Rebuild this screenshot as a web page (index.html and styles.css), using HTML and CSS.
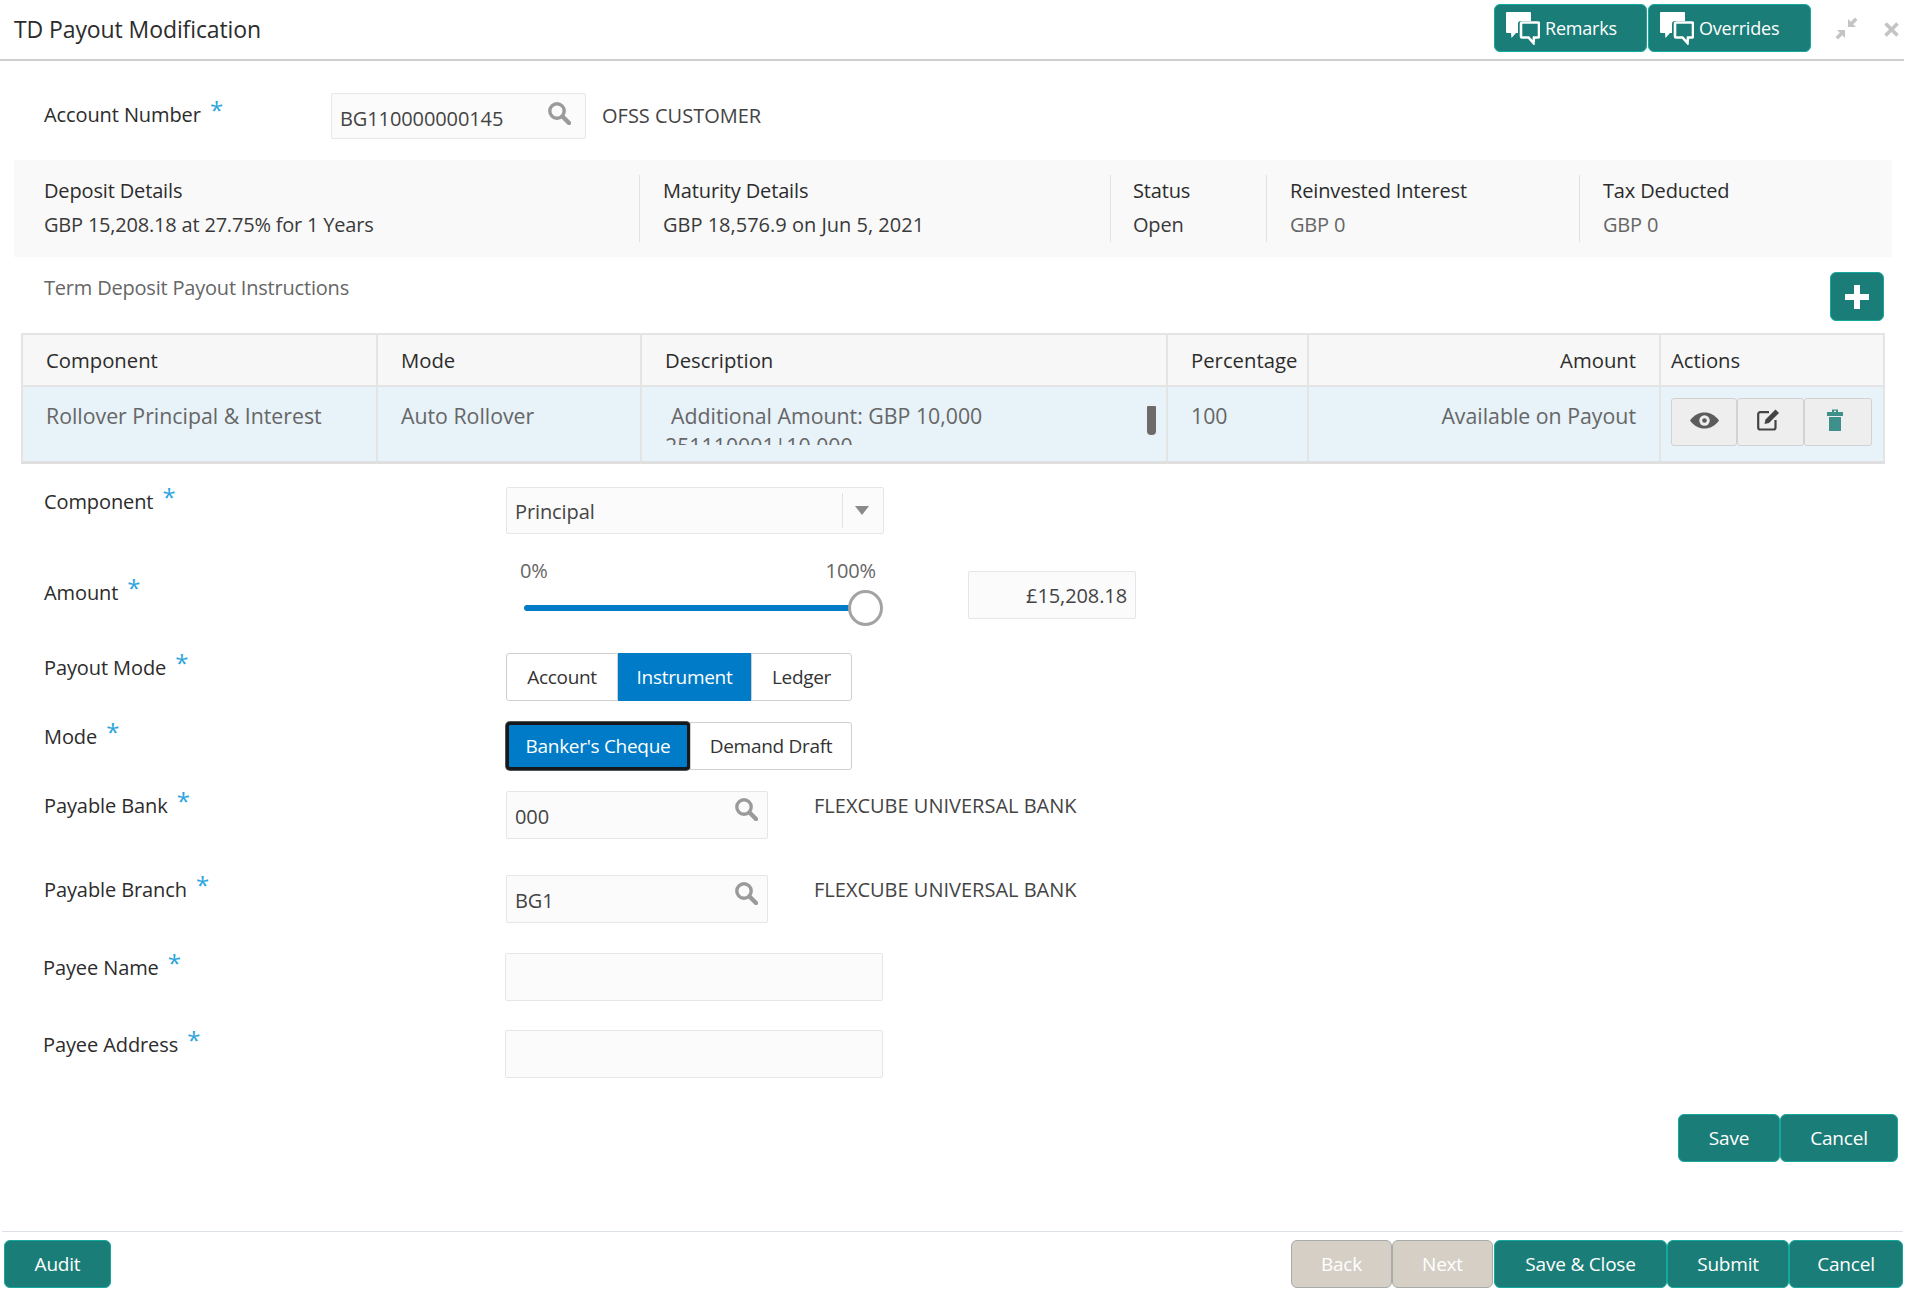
FILE: index.html
```html
<!DOCTYPE html>
<html lang="en">
<head>
<meta charset="utf-8">
<title>TD Payout Modification</title>
<link rel="stylesheet" href="styles.css">
</head>
<body>
<svg class="defs" width="0" height="0" aria-hidden="true">
  <symbol id="i-search" viewBox="0 0 24 24"><circle cx="10" cy="10" r="7.2" fill="none" stroke="currentColor" stroke-width="3.4"/><path d="M15.5 15.5 22 22" stroke="currentColor" stroke-width="4.4" stroke-linecap="round"/></symbol>
  <symbol id="i-chat" viewBox="0 0 34 33"><path d="M1 0h23a1 1 0 0 1 1 1v8H15a3 3 0 0 0-3 3v9H10l-4.500 5-.5-5H1a1 1 0 0 1-1-1V1a1 1 0 0 1 1-1z" fill="#fff"/><path d="M16 10.500h16a1 1 0 0 1 1 1v13a1 1 0 0 1-1 1h-4l-.5 5.500-5-5.500H16a1 1 0 0 1-1-1v-13a1 1 0 0 1 1-1z" fill="#1b7d78" stroke="#fff" stroke-width="2.600"/></symbol>
</svg>
<header class="header">
  <h1 class="title">TD Payout Modification</h1>
  <div class="header-actions">
    <div class="btn-group">
      <button class="btn btn-remark"><svg class="chat"><use href="#i-chat"/></svg>Remarks</button>
      <button class="btn btn-override"><svg class="chat"><use href="#i-chat"/></svg>Overrides</button>
    </div>
    <svg class="win-min" viewBox="0 0 25 25"><path d="M14 11V3l2.800 2.800L21 1.500 23.500 4l-4.300 4.200L22 11zM11 14v8l-2.800-2.800L4 23.500 1.500 21l4.300-4.200L3 14z" fill="#c4c4c4"/></svg>
    <svg class="win-close" viewBox="0 0 15 15"><path d="M1.500 1.500l12 12M13.500 1.500l-12 12" stroke="#c4c4c4" stroke-width="3.600"/></svg>
  </div>
</header>

<section class="account-row">
  <label class="label account-label">Account Number <span class="req">*</span></label>
  <div class="input account-input"><span class="val">BG110000000145</span><svg class="search"><use href="#i-search"/></svg></div>
  <span class="account-name">OFSS CUSTOMER</span>
</section>

<section class="summary">
  <div class="cell c1"><div class="k">Deposit Details</div><div class="v">GBP 15,208.18 at 27.75% for 1 Years</div></div>
  <div class="cell c2"><div class="k">Maturity Details</div><div class="v">GBP 18,576.9 on Jun 5, 2021</div></div>
  <div class="cell c3"><div class="k">Status</div><div class="v">Open</div></div>
  <div class="cell c4"><div class="k">Reinvested Interest</div><div class="v muted">GBP 0</div></div>
  <div class="cell c5"><div class="k">Tax Deducted</div><div class="v muted">GBP 0</div></div>
</section>

<section class="section-head">
  <div class="section-title">Term Deposit Payout Instructions</div>
  <button class="btn add-btn" aria-label="Add"><svg viewBox="0 0 28 28" width="28" height="28"><path d="M11 2h6v9h9v6h-9v9h-6v-9H2v-6h9z" fill="#fff"/></svg></button>
</section>

<table class="grid">
  <thead>
    <tr>
      <th class="w1">Component</th><th class="w2">Mode</th><th class="w3">Description</th><th class="w4">Percentage</th><th class="w5 right">Amount</th><th class="w6">Actions</th>
    </tr>
  </thead>
  <tbody>
    <tr>
      <td>Rollover Principal &amp; Interest</td>
      <td>Auto Rollover</td>
      <td class="desc-cell">
        <div class="desc"><div class="desc-a">Additional Amount: GBP 10,000</div><div class="desc-b">251110001|10,000</div></div>
        <span class="scroll"></span>
      </td>
      <td>100</td>
      <td class="right">Available on Payout</td>
      <td class="actions">
        <div class="act-group">
          <button class="act a-eye" aria-label="View"><svg viewBox="0 0 29 17" width="29" height="17"><path d="M0 8.500C4 3 9 .5 14.500.5S25 3 29 8.500C25 14 20 16.500 14.500 16.500S4 14 0 8.500z" fill="#5c5c5c"/><circle cx="14.500" cy="8.500" r="5.200" fill="#eee"/><circle cx="14.500" cy="8.500" r="2.300" fill="#5c5c5c"/></svg></button>
          <button class="act a-edit" aria-label="Edit"><svg viewBox="0 0 23 23" width="23" height="23"><path d="M18.500 12v7.500a2 2 0 0 1-2 2H3.200a2 2 0 0 1-2-2V6.200a2 2 0 0 1 2-2H12" fill="none" stroke="#444" stroke-width="2.200"/><path d="M7.500 16l1-4.500L18.500 1.500l3.500 3.500L12 15z" fill="#444"/></svg></button>
          <button class="act a-trash" aria-label="Delete"><svg viewBox="0 0 16 22" width="16" height="22"><path d="M5 3V.5h6V3h5v4H0V3zM7 1.800V3h2V1.800zM2 8h12v14H2z" fill="#3f8f8b"/></svg></button>
        </div>
      </td>
    </tr>
  </tbody>
</table>

<form class="form">
  <div class="row r-component">
    <label class="label">Component <span class="req">*</span></label>
    <div class="input select"><span class="val">Principal</span><span class="sel-arrow"></span></div>
  </div>
  <div class="row r-amount">
    <label class="label amount-label">Amount <span class="req">*</span></label>
    <div class="slider">
      <div class="slider-labels"><span>0%</span><span>100%</span></div>
      <div class="track"><span class="thumb"></span></div>
    </div>
    <div class="input amount-box"><span class="val">£15,208.18</span></div>
  </div>
  <div class="row r-payout">
    <label class="label">Payout Mode <span class="req">*</span></label>
    <div class="seg">
      <span class="seg-btn s-acc">Account</span><span class="seg-btn s-ins on">Instrument</span><span class="seg-btn s-led">Ledger</span>
    </div>
  </div>
  <div class="row r-mode">
    <label class="label">Mode <span class="req">*</span></label>
    <div class="seg">
      <span class="seg-btn s-bank on focus">Banker's Cheque</span><span class="seg-btn s-dd">Demand Draft</span>
    </div>
  </div>
  <div class="row r-bank">
    <label class="label">Payable Bank <span class="req">*</span></label>
    <div class="input lookup"><span class="val">000</span><svg class="search"><use href="#i-search"/></svg></div>
    <span class="lookup-name">FLEXCUBE UNIVERSAL BANK</span>
  </div>
  <div class="row r-branch">
    <label class="label">Payable Branch <span class="req">*</span></label>
    <div class="input lookup"><span class="val">BG1</span><svg class="search"><use href="#i-search"/></svg></div>
    <span class="lookup-name">FLEXCUBE UNIVERSAL BANK</span>
  </div>
  <div class="row r-payee">
    <label class="label">Payee Name <span class="req">*</span></label>
    <div class="input wide"></div>
  </div>
  <div class="row r-addr">
    <label class="label">Payee Address <span class="req">*</span></label>
    <div class="input wide"></div>
  </div>
  <div class="form-actions">
    <button type="button" class="btn b-save">Save</button><button type="button" class="btn b-cancel">Cancel</button>
  </div>
</form>

<footer class="footer">
  <button class="btn b-audit">Audit</button>
  <div class="btn-group">
    <button class="btn off b-back">Back</button><button class="btn off b-next">Next</button><button class="btn b-sc">Save &amp; Close</button><button class="btn b-submit">Submit</button><button class="btn b-fcancel">Cancel</button>
  </div>
</footer>
</body>
</html>
```
FILE: styles.css
```css
* { box-sizing: border-box; }
html, body { margin: 0; padding: 0; }
body {
  width: 1916px; height: 1290px; overflow: hidden; background: #fff;
  font-family: "Open Sans", "Noto Sans", sans-serif; font-size: 20px; color: #2c2c2c;
  letter-spacing: -0.1px;
}
.defs { position: absolute; }
button { font: inherit; letter-spacing: inherit; padding: 0; cursor: pointer; }

.header { height: 61px; margin-right: 12px; border-bottom: 2px solid #cfcfcf; display: flex; justify-content: space-between; padding-left: 14px; }
.title { margin: 0; font-weight: 400; font-size: 23px; line-height: 58px; color: #2c2c2c; }
.header-actions { display: flex; align-items: flex-start; padding-top: 4px; }
.btn-group { display: flex; }
.btn { height: 48px; background: #1b7d78; border: 1px solid #15a89c; border-radius: 6px; color: #fff; font-size: 19px; letter-spacing: -0.2px; }
.btn-remark, .btn-override { display: flex; align-items: center; padding-left: 11px; height: 48px; font-size: 18px; }
.btn-remark { width: 153px; margin-right: 1px; }
.btn-override { width: 163px; }
.chat { width: 34px; height: 33px; margin-right: 5px; }
.win-min { width: 25px; height: 25px; margin: 12px 0 0 23px; }
.win-close { width: 15px; height: 15px; margin: 18px 5px 0 25px; }

.label { color: #2c2c2c; line-height: 30px; display: block; }
.req { color: #2ba5dd; font-size: 24px; line-height: 20px; margin-left: 4px; vertical-align: 3px; }

.input { background: #fbfbfb; border: 1px solid #e6e6e6; border-radius: 2px; height: 47px; display: flex; align-items: center; color: #444; position: relative; }
.val { padding-left: 8px; }

.account-row { height: 99px; display: flex; align-items: flex-start; padding: 32px 0 0 44px; }
.account-label { width: 287px; padding-top: 7px; }
.account-input { width: 255px; height: 46px; justify-content: space-between; padding-right: 14px; }
.account-input .val { margin-top: 5px; }
.search { width: 24px; height: 24px; color: #9a9a9a; margin-top: -6px; }
.account-name { margin-left: 16px; color: #444; line-height: 46px; letter-spacing: 0; }

.summary { margin: 0 24px 0 14px; height: 97px; background: #f9f9f9; display: flex; padding-top: 15px; }
.cell { height: 67px; border-right: 1px solid #e2e2e2; padding-left: 30px; }
.c1 { width: 626px; }
.c2 { width: 471px; padding-left: 23px; }
.c3 { width: 156px; padding-left: 22px; }
.c4 { width: 313px; padding-left: 23px; }
.c5 { border-right: 0; padding-left: 23px; }
.k { line-height: 32px; height: 33px; color: #2c2c2c; letter-spacing: -0.15px; }
.v { line-height: 34px; color: #3a3a3a; letter-spacing: -0.2px; }
.c2 .v { letter-spacing: 0; }
.muted { color: #666; }

.section-head { height: 76px; display: flex; justify-content: space-between; padding: 15px 32px 0 44px; }
.section-title { color: #666; line-height: 32px; letter-spacing: -0.2px; }
.add-btn { width: 54px; height: 49px; display: flex; align-items: center; justify-content: center; }

.grid { margin-left: 21px; width: 1862px; border-collapse: collapse; table-layout: fixed; font-size: 21.3px; letter-spacing: 0; }
.grid th { height: 52px; background: #f7f7f7; font-size: 20.3px; text-align: left; color: #2c2c2c; border: 2px solid #e4e4e4; padding: 0 23px; font-weight: 500; }
.grid th.w6 { padding-left: 10px; }
.grid td { height: 76px; background: #e7f2f9; color: #666; vertical-align: top; padding: 14px 23px 0; border: 2px solid #e4e4e4; border-bottom: 3px solid #dfdfdf; font-weight: 500; overflow: hidden; }
.grid .right { text-align: right; }
.w1 { width: 355px; } .w2 { width: 264px; } .w3 { width: 526px; } .w4 { width: 141px; } .w5 { width: 352px; } .w6 { width: 224px; }
.grid td.desc-cell { position: relative; padding-top: 0; }
.desc { height: 58px; overflow: hidden; padding-top: 14px; }
.desc-a { padding-left: 6px; line-height: 30px; }
.desc-b { line-height: 30px; }
.scroll { position: absolute; top: 19px; right: 10px; width: 9px; height: 29px; background: #6e6a6a; border-radius: 1px 1px 4px 4px; }
.grid td.actions { padding: 11px 0 0 10px; }
.act-group { display: flex; }
.act { height: 48px; background: #eee; border: 1px solid #d2d2d2; border-radius: 3px; display: flex; align-items: center; justify-content: center; }
.act svg { margin-top: -3px; }
.a-eye { width: 66px; padding-left: 1px; }
.a-edit { width: 67px; padding-right: 4px; }
.a-edit svg { margin-top: -5px; }
.a-trash { width: 68px; padding-right: 7px; }
.a-trash svg { margin-top: -5px; }

.form { padding-top: 23px; padding-left: 44px; }
.row { display: flex; align-items: flex-start; }
.row > .label { width: 462px; }
.select { width: 378px; justify-content: space-between; }
.select .val { margin-top: 2px; }
.sel-arrow { width: 41px; height: 35px; border-left: 1px solid #e2e2e2; position: relative; }
.sel-arrow::after { content: ""; position: absolute; left: 12px; top: 13px; border: 7px solid transparent; border-top: 9px solid #8a8a8a; border-bottom: 0; }

.r-amount { margin-top: 23px; height: 70px; }
.r-amount > .amount-label { padding-top: 21px; }
.slider { width: 378px; }
.slider-labels { display: flex; justify-content: space-between; padding: 0 8px 0 14px; line-height: 28px; color: #666; height: 48px; }
.track { position: relative; height: 6px; margin-left: 18px; width: 326px; background: #007bc7; border-radius: 3px; }
.thumb { position: absolute; right: -33px; top: -15px; width: 35px; height: 36px; border-radius: 50%; background: #fff; border: 3px solid #a3a3a3; }
.amount-box { width: 168px; height: 48px; justify-content: flex-end; padding-right: 8px; margin: 14px 0 0 84px; }
.amount-box .val { margin-top: 2px; }

.seg { display: flex; height: 48px; font-size: 19px; letter-spacing: -0.3px; }
.seg-btn { display: flex; align-items: center; justify-content: center; background: #fff; color: #333; border: 1px solid #cfcfcf; }
.seg-btn.on { background: #007bc7; color: #fff; border-color: #007bc7; }
.seg-btn:first-child { border-radius: 3px 0 0 3px; }
.seg-btn:last-child { border-radius: 0 3px 3px 0; }
.s-acc { width: 112px; } .s-ins { width: 133px; } .s-led { width: 101px; }
.s-bank { width: 184px; } .s-dd { width: 162px; }
.seg-btn.focus { border: 3px solid #15191c; border-radius: 4px; box-shadow: 0 0 0 1px #555; }

.r-payout { margin-top: 26px; }
.r-mode { margin-top: 21px; }
.r-bank { margin-top: 21px; }
.r-branch { margin-top: 36px; }
.r-payee { margin-top: 30px; margin-left: -1px; }
.r-addr { margin-top: 29px; margin-left: -1px; }
.lookup { width: 262px; height: 48px; justify-content: space-between; padding-right: 9px; }
.lookup .val { margin-top: 3px; }
.lookup-name { margin-left: 46px; line-height: 30px; color: #444; letter-spacing: 0; }
.wide { width: 378px; height: 48px; }
.r-bank .search, .r-branch .search { margin-top: -12px; }

.form-actions { display: flex; justify-content: flex-end; margin-top: 36px; padding-right: 18px; }
.b-save { width: 102px; } .b-cancel { width: 118px; }

.footer { position: absolute; left: 2px; right: 13px; top: 1231px; border-top: 1px solid #dbe1e6; display: flex; justify-content: space-between; padding: 8px 0 0 2px; }
.b-audit { width: 107px; }
.btn.off { background: #d5cfc5; border-color: #a9aba9; }
.b-back, .b-next { width: 101px; }
.b-sc { width: 173px; margin-left: 1px; } .b-submit { width: 122px; } .b-fcancel { width: 114px; }
```
